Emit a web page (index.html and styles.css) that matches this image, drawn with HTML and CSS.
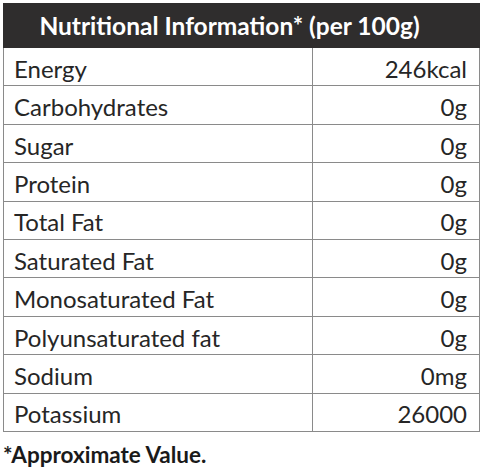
FILE: index.html
```html
<!DOCTYPE html>
<html lang="en">
<head>
    <meta charset="UTF-8">
    <title>Nutritional Information</title>
    <link rel="stylesheet" href="styles.css">
</head>
<body>
    <table class="nutrition">
        <colgroup>
            <col class="col-name">
            <col class="col-value">
        </colgroup>
        <thead>
            <tr>
                <th colspan="2">Nutritional Information* (per 100g)</th>
            </tr>
        </thead>
        <tbody>
            <tr><td class="name">Energy</td><td class="value">246kcal</td></tr>
            <tr><td class="name">Carbohydrates</td><td class="value">0g</td></tr>
            <tr><td class="name">Sugar</td><td class="value">0g</td></tr>
            <tr><td class="name">Protein</td><td class="value">0g</td></tr>
            <tr><td class="name">Total Fat</td><td class="value">0g</td></tr>
            <tr><td class="name">Saturated Fat</td><td class="value">0g</td></tr>
            <tr><td class="name">Monosaturated Fat</td><td class="value">0g</td></tr>
            <tr><td class="name">Polyunsaturated fat</td><td class="value">0g</td></tr>
            <tr><td class="name">Sodium</td><td class="value">0mg</td></tr>
            <tr><td class="name">Potassium</td><td class="value">26000</td></tr>
        </tbody>
    </table>
    <p class="note">*Approximate Value.</p>
</body>
</html>
```

FILE: styles.css
```css
body {
    margin: 0;
    padding: 3px 0 0 3px;
    background: #fff;
    font-family: Lato, 'Open Sans', sans-serif;
    color: #262626;
}
.nutrition {
    width: 477px;
    border-collapse: collapse;
    table-layout: fixed;
}
.col-name {
    width: 309px;
}
.nutrition thead tr {
    height: 44px;
}
.nutrition tbody tr {
    height: 38.4px;
}
.nutrition th {
    padding: 0 24px 0 0;
    background: #2f2d2d;
    color: #fff;
    font-size: 24.5px;
    font-weight: 700;
    text-align: center;
    border: 1px solid #2f2d2d;
}
.nutrition td {
    padding: 5px 12px 0 10px;
    border: 1px solid #8a8a8a;
    font-size: 24px;
    line-height: 1.2;
}
.nutrition .name {
    text-align: left;
}
.nutrition .value {
    text-align: right;
}
.note {
    margin: 9px 0 0 0;
    font-size: 22.5px;
    font-weight: 700;
    color: #1a1a1a;
}
```
